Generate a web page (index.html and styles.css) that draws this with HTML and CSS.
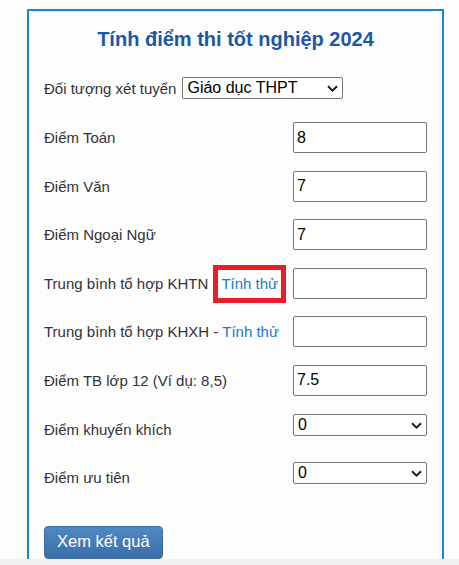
FILE: index.html
```html
<!DOCTYPE html>
<html lang="vi">
<head>
<meta charset="utf-8">
<title>Tính điểm thi tốt nghiệp 2024</title>
<link rel="stylesheet" href="styles.css">
</head>
<body>
<div class="box">
  <h1 class="title">Tính điểm thi tốt nghiệp 2024</h1>
  <div class="target">
    <label class="target-label">Đối tượng xét tuyển</label>
    <span class="sel sel-wide">
      <select class="select"><option>Giáo dục THPT</option></select>
      <svg class="chev" width="11" height="7" viewBox="0 0 11 7"><path d="M1 1.2 L5.5 5.6 L10 1.2" fill="none" stroke="#1a1a1a" stroke-width="1.9"/></svg>
    </span>
  </div>
  <div class="grid">
    <label class="lbl">Điểm Toán</label>
    <input class="inp" type="text" value="8">
    <label class="lbl">Điểm Văn</label>
    <input class="inp" type="text" value="7">
    <label class="lbl">Điểm Ngoại Ngữ</label>
    <input class="inp" type="text" value="7">
    <label class="lbl">Trung bình tổ hợp KHTN - <a class="try marked">Tính thử</a></label>
    <input class="inp" type="text" value="">
    <label class="lbl">Trung bình tổ hợp KHXH - <a class="try">Tính thử</a></label>
    <input class="inp" type="text" value="">
    <label class="lbl">Điểm TB lớp 12 (Ví dụ: 8,5)</label>
    <input class="inp" type="text" value="7.5">
    <label class="lbl">Điểm khuyến khích</label>
    <span class="sel">
      <select class="select"><option>0</option></select>
      <svg class="chev" width="11" height="7" viewBox="0 0 11 7"><path d="M1 1.2 L5.5 5.6 L10 1.2" fill="none" stroke="#1a1a1a" stroke-width="1.9"/></svg>
    </span>
    <label class="lbl">Điểm ưu tiên</label>
    <span class="sel">
      <select class="select"><option>0</option></select>
      <svg class="chev" width="11" height="7" viewBox="0 0 11 7"><path d="M1 1.2 L5.5 5.6 L10 1.2" fill="none" stroke="#1a1a1a" stroke-width="1.9"/></svg>
    </span>
  </div>
  <button class="btn" type="button">Xem kết quả</button>
</div>
<div class="bottom-bar"></div>
</body>
</html>
```
FILE: styles.css
```css
html, body {
  margin: 0;
  padding: 0;
  background: #fdfdfd;
}
body {
  font-family: "Liberation Sans", Arial, sans-serif;
  font-size: 15px;
  color: #333;
}
.box {
  box-sizing: border-box;
  width: 417px;
  margin: 9px 0 0 27px;
  border: 2px solid #1a87c8;
  border-bottom: none;
  padding: 16px 15px 20px;
  background: #fdfdfd;
}
.title {
  margin: 0;
  font-size: 20px;
  line-height: 24px;
  font-weight: bold;
  text-align: center;
  color: #1c56a8;
}
.target {
  display: flex;
  align-items: center;
  gap: 6px;
  margin-top: 26px;
  height: 22px;
}
.target-label {
  white-space: nowrap;
}
.sel {
  position: relative;
  display: block;
}
.sel-wide {
  width: 161px;
}
.select {
  -webkit-appearance: none;
  appearance: none;
  box-sizing: border-box;
  width: 100%;
  height: 22px;
  margin: 0;
  padding: 0 4px;
  border: 1px solid #767676;
  border-radius: 2px;
  background: #fff;
  font-family: "Liberation Sans", Arial, sans-serif;
  font-size: 16px;
  line-height: 20px;
  color: #000;
}
.chev {
  position: absolute;
  right: 5px;
  top: 8px;
  pointer-events: none;
}
.grid {
  display: grid;
  grid-template-columns: 1fr 134px;
  grid-auto-rows: 31px;
  row-gap: 17.6px;
  margin-top: 23px;
}
.lbl {
  line-height: 31px;
  white-space: nowrap;
}
.grid .sel {
  align-self: start;
}
.inp {
  box-sizing: border-box;
  width: 134px;
  height: 31px;
  margin: 0;
  padding: 1px 3px;
  border: 1px solid #767676;
  border-radius: 2px;
  background: #fff;
  font-family: "Liberation Sans", Arial, sans-serif;
  font-size: 16px;
  color: #000;
}
.try {
  color: #2277cf;
  text-decoration: none;
}
.marked {
  position: relative;
}
.marked::after {
  content: "";
  position: absolute;
  left: -8px;
  right: -8px;
  top: -10px;
  bottom: -11px;
  border: 5px solid #e41f27;
}
.btn {
  display: block;
  box-sizing: border-box;
  margin-top: 32.8px;
  height: 33px;
  padding: 3px 12px 7px;
  border: 1px solid #3a6ca5;
  border-radius: 4px;
  background: linear-gradient(#5189c3, #3b6ea8);
  color: #fff;
  font-family: "Liberation Sans", Arial, sans-serif;
  font-size: 16.5px;
  line-height: 23px;
}
.bottom-bar {
  position: fixed;
  left: 0;
  right: 0;
  bottom: 0;
  height: 6px;
  background: #f1f1f1;
}
```
